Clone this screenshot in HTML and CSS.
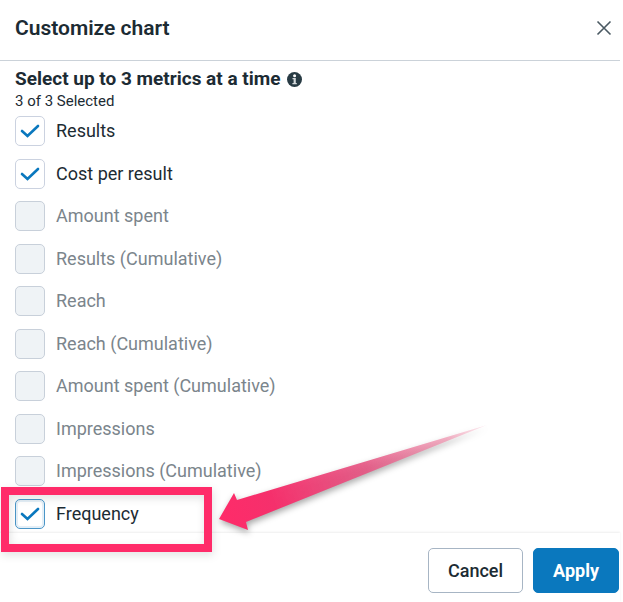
FILE: index.html
```
<!DOCTYPE html>
<html lang="en">
<head>
    <meta charset="UTF-8">
    <meta name="viewport" content="width=device-width, initial-scale=1.0">
    <title>Customize chart</title>
    <link rel="stylesheet" href="styles.css">
</head>
<body>
    <form class="dialog">
        <header class="dialog-header">
            <h1>Customize chart</h1>
            <button type="button" class="close" aria-label="Close">
                <svg width="16" height="16" viewBox="0 0 16 16">
                    <path d="M1.5 1.5l13 13M14.5 1.5l-13 13" fill="none" stroke="#4a5962" stroke-width="1.6"/>
                </svg>
            </button>
        </header>

        <main class="dialog-body">
            <h2>
                Select up to 3 metrics at a time
                <svg class="info" width="15" height="15" viewBox="0 0 15 15">
                    <circle cx="7.5" cy="7.5" r="7.5" fill="#283b44"/>
                    <circle cx="7.6" cy="3.7" r="1.5" fill="#fff"/>
                    <path d="M5.5 6h3.3v5h1v1.3H5.4V11h1.2V7.3H5.5z" fill="#d5dadd"/>
                </svg>
            </h2>
            <p class="count">3 of 3 Selected</p>

            <ul class="metrics">
                <li><label><input type="checkbox" checked><span>Results</span></label></li>
                <li><label><input type="checkbox" checked><span>Cost per result</span></label></li>
                <li><label><input type="checkbox" disabled><span>Amount spent</span></label></li>
                <li><label><input type="checkbox" disabled><span>Results (Cumulative)</span></label></li>
                <li><label><input type="checkbox" disabled><span>Reach</span></label></li>
                <li><label><input type="checkbox" disabled><span>Reach (Cumulative)</span></label></li>
                <li><label><input type="checkbox" disabled><span>Amount spent (Cumulative)</span></label></li>
                <li><label><input type="checkbox" disabled><span>Impressions</span></label></li>
                <li><label><input type="checkbox" disabled><span>Impressions (Cumulative)</span></label></li>
                <li class="marked">
                    <label><input type="checkbox" class="active" checked><span>Frequency</span></label>
                    <div class="frame"></div>
                    <svg class="arrow" width="280" height="120" viewBox="0 0 280 120">
                        <defs>
                            <linearGradient id="fade" gradientUnits="userSpaceOnUse" x1="0" y1="99" x2="268" y2="5">
                                <stop offset="0" stop-color="#ff2b69"/>
                                <stop offset="0.2" stop-color="#f5306c"/>
                                <stop offset="0.55" stop-color="#e65583" stop-opacity="0.9"/>
                                <stop offset="0.85" stop-color="#f08fac" stop-opacity="0.7"/>
                                <stop offset="1" stop-color="#f8b8ca" stop-opacity="0.3"/>
                            </linearGradient>
                        </defs>
                        <path d="M0 99L15 73L18 80L268 5L27 102L29 110Z" fill="url(#fade)"/>
                    </svg>
                </li>
            </ul>
        </main>

        <footer class="dialog-footer">
            <button type="button" class="btn">Cancel</button>
            <button type="submit" class="btn primary">Apply</button>
        </footer>
    </form>
</body>
</html>
```
FILE: styles.css
```
* {
    box-sizing: border-box;
}

body {
    margin: 0;
    background-color: #fff;
    color: #1c2b33;
    font-family: Roboto, "Liberation Sans", sans-serif;
    font-size: 18px;
}

.dialog {
    display: flex;
    flex-direction: column;
    min-height: 100vh;
    margin-right: 3px;
}

.dialog-header {
    display: flex;
    justify-content: space-between;
    align-items: center;
    padding: 16px 8px 20px 15px;
    border-bottom: 1px solid #cbd2d9;
}

h1 {
    margin: 0;
    font-size: 21px;
    line-height: 24px;
    font-weight: 600;
}

.close {
    display: flex;
    padding: 0;
    border: none;
    background: none;
    cursor: pointer;
}

.dialog-body {
    flex: 1;
    display: flex;
    flex-direction: column;
    padding: 6px 15px 4px;
}

h2 {
    display: flex;
    align-items: center;
    gap: 6px;
    margin: 0;
    font-size: 19px;
    line-height: 24px;
    font-weight: 700;
}

.count {
    margin: 0 0 5px;
    font-size: 15px;
    line-height: 20px;
}

.metrics {
    flex: 1;
    display: flex;
    flex-direction: column;
    justify-content: space-between;
    margin: 0;
    padding: 0;
    list-style: none;
}

.metrics label {
    display: flex;
    align-items: center;
    gap: 11px;
    line-height: 30px;
}

.metrics input {
    appearance: none;
    width: 30px;
    height: 30px;
    margin: 0;
    border: 1px solid #cbd2e0;
    border-radius: 5px;
    background-color: #fff;
}

.metrics input:checked {
    background-image: url("data:image/svg+xml,%3Csvg xmlns='http://www.w3.org/2000/svg' viewBox='0 0 28 28'%3E%3Cpath d='M6 14l5.5 5L22 9' fill='none' stroke='%230a78be' stroke-width='2.6' stroke-linecap='round'/%3E%3C/svg%3E");
}

.metrics input:disabled {
    border-color: #c8d0da;
    background-color: #eff3f6;
}

.metrics input:disabled + span {
    color: #7b858c;
}

.metrics .active {
    border-color: #4b96c8;
    box-shadow: inset 0 0 0 2px #e4eff7;
}

.marked {
    position: relative;
}

/* callout around the last metric */
.frame {
    position: absolute;
    top: -12px;
    left: -14px;
    width: 211px;
    height: 65px;
    border: 8px solid #ff2b69;
    filter: drop-shadow(1px 3px 4px rgba(0, 0, 0, 0.12));
    pointer-events: none;
}

.arrow {
    position: absolute;
    top: -79px;
    left: 204px;
    overflow: visible;
    filter: drop-shadow(1px 3px 3px rgba(0, 0, 0, 0.35));
    pointer-events: none;
}

.dialog-footer {
    display: flex;
    justify-content: flex-end;
    gap: 10px;
    padding: 15px 1px 9px;
    box-shadow: 0 -1px 2px rgba(0, 0, 0, 0.07);
}

.btn {
    padding: 0 19px;
    border: 1px solid #a7b5c4;
    border-radius: 5px;
    background-color: #fff;
    color: #1c2b33;
    font: 500 18px/43px Roboto, "Liberation Sans", sans-serif;
    cursor: pointer;
}

.primary {
    border-color: #0a78be;
    background-color: #0a78be;
    color: #fff;
    font-weight: 700;
}
```
